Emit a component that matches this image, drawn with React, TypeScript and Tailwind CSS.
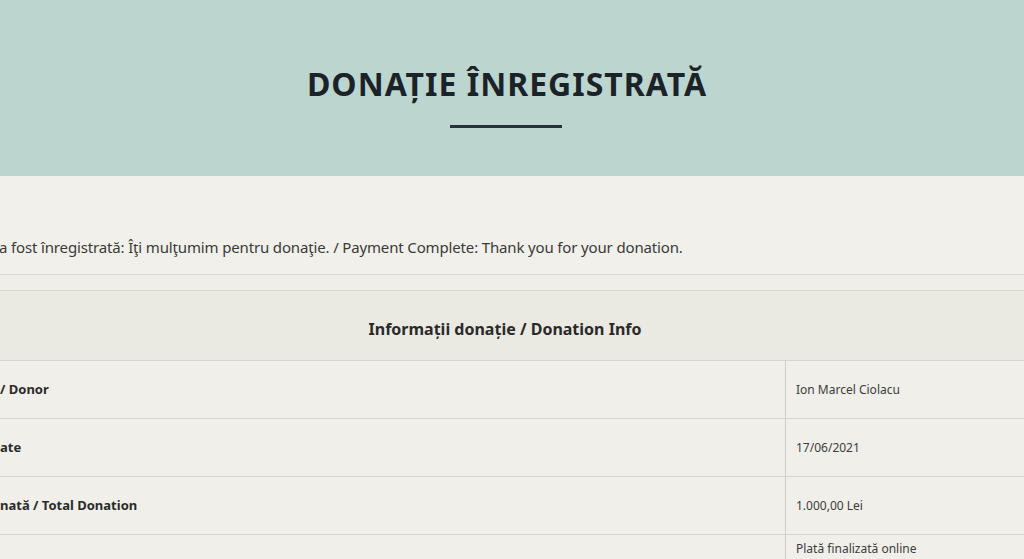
import * as React from 'react';

const rows = [
  { label: '/ Donor', value: 'Ion Marcel Ciolacu' },
  { label: 'ate', value: '17/06/2021' },
  { label: 'nată / Total Donation', value: '1.000,00 Lei' },
  { label: '', value: 'Plată finalizată online' },
];

export default function App() {
  return (
    <div
      className="w-[1024px] h-[559px] overflow-hidden bg-[#efeee8] text-[#2b2b2b]"
      style={{ fontFamily: '"Noto Sans", "Open Sans", sans-serif' }}
    >
      <header className="h-[176px] bg-[#bcd6cf] flex flex-col items-center pt-[63px]">
        <h1 className="text-[32px] leading-[42px] font-bold tracking-[1px] text-[#1b2329] -ml-[10px]">
          DONAȚIE ÎNREGISTRATĂ
        </h1>
        <div className="mt-[20px] -ml-[12px] w-[112px] h-[3px] bg-[#26323a]" />
      </header>

      <div className="h-[99px] flex items-center pt-[44px] border-b border-[#dcdad3] bg-[#f1f0ea]">
        <p className="text-[15px] text-[#3a3a3a] -ml-[1px] tracking-[-0.15px]">
          a fost înregistrată: Îţi mulţumim pentru donaţie. / Payment Complete: Thank you for your donation.
        </p>
      </div>

      <div className="mt-[15px] border-t border-[#dcdad3]">
        <div className="h-[70px] flex items-center justify-center bg-[#eae9e2] border-b border-[#d6d4cd]">
          <span className="text-[16px] font-bold text-[#2a2a2a] pt-[6px] -ml-[14px]">
            Informații donație / Donation Info
          </span>
        </div>
        {rows.map((r, i) => (
          <div key={i} className="grid grid-cols-[786px_1fr] h-[58px] border-b border-[#d6d4cd] bg-[#f0efe9]">
            <div className="flex items-center border-r border-[#cfcdc6] text-[13px] font-bold text-[#2b2b2b]">
              {r.label}
            </div>
            <div className={`flex pl-[10px] text-[12px] leading-[16px] text-[#3d3d3d] ${i === 3 ? 'items-start pt-[6px]' : 'items-center'}`}>
              {r.value}
            </div>
          </div>
        ))}
      </div>
    </div>
  );
}
